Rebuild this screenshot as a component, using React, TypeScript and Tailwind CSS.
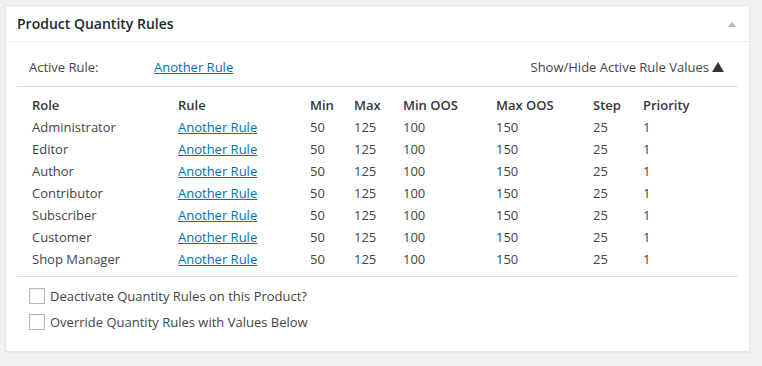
import React from "react";

const rows = [
  "Administrator",
  "Editor",
  "Author",
  "Contributor",
  "Subscriber",
  "Customer",
  "Shop Manager",
];

const cols = "grid grid-cols-[146px_132px_44px_49px_93px_97px_50px_1fr]";

export default function App() {
  return (
    <div
      className="min-h-[366px] bg-[#f1f1f1] pt-[5px] pl-[5px] text-[13px] text-[#444]"
      style={{ fontFamily: '"Open Sans", sans-serif' }}
    >
      <div className="h-[347px] w-[745px] border border-[#e5e5e5] bg-white shadow-[0_1px_1px_rgba(0,0,0,0.04)]">
        <div className="flex h-[36px] items-center justify-between border-b border-[#eee] pl-[11px] pr-[13px]">
          <h2 className="text-[14px] font-semibold text-[#23282d]">Product Quantity Rules</h2>
          <svg width="8" height="5" viewBox="0 0 8 5" className="mt-[2px]">
            <path d="M0 5 L4 0 L8 5 Z" fill="#b4b9be" />
          </svg>
        </div>

        <div className="px-[11px]">
          <div className="mt-[14px] flex h-[22px] items-center justify-between pl-[12px] pr-[14px] leading-[22px]">
            <div className="flex">
              <span className="w-[125px]">Active Rule:</span>
              <a href="#" className="text-[#0073aa] underline">Another Rule</a>
            </div>
            <div className="flex items-center gap-[3px]">
              <span>Show/Hide Active Rule Values</span>
              <svg width="12" height="10" viewBox="0 0 12 10">
                <path d="M0 10 L6 0 L12 10 Z" fill="#333" />
              </svg>
            </div>
          </div>

          <div className="mt-[8px] border-t border-[#ddd]" />

          <div className="mt-[7px] pl-[15px] leading-[22px]">
            <div className={`${cols} font-semibold text-[#32373c]`}>
              <span>Role</span>
              <span>Rule</span>
              <span>Min</span>
              <span>Max</span>
              <span>Min OOS</span>
              <span>Max OOS</span>
              <span>Step</span>
              <span>Priority</span>
            </div>
            {rows.map((r) => (
              <div key={r} className={cols}>
                <span>{r}</span>
                <span>
                  <a href="#" className="text-[#0073aa] underline">Another Rule</a>
                </span>
                <span>50</span>
                <span>125</span>
                <span>100</span>
                <span>150</span>
                <span>25</span>
                <span>1</span>
              </div>
            ))}
          </div>

          <div className="mt-[6px] border-t border-[#ddd]" />

          <div className="mt-[11px] flex flex-col gap-[10px] pl-[12px]">
            {["Deactivate Quantity Rules on this Product?", "Override Quantity Rules with Values Below"].map((t) => (
              <label key={t} className="flex items-center gap-[5px] leading-[16px]">
                <span className="h-[16px] w-[16px] border border-[#b4b9be] bg-white shadow-[inset_0_1px_2px_rgba(0,0,0,0.07)]" />
                <span>{t}</span>
              </label>
            ))}
          </div>
        </div>
      </div>
    </div>
  );
}
